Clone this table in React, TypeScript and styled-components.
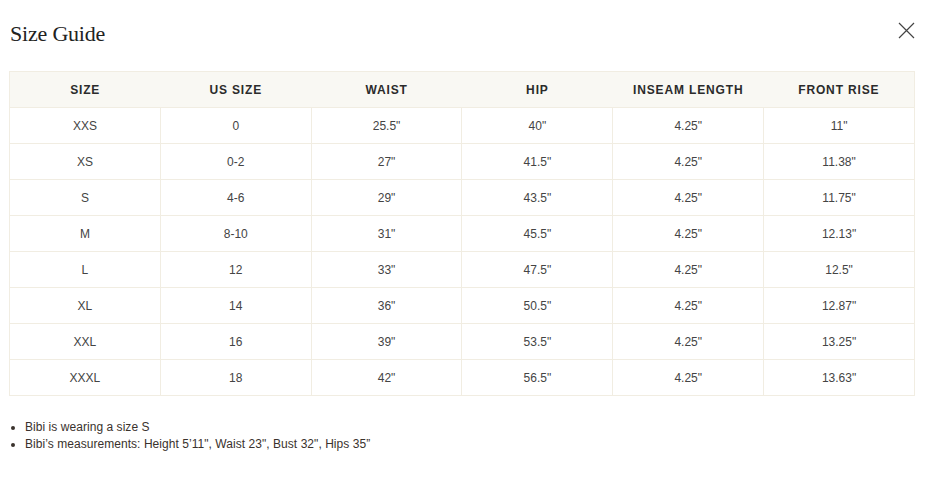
import React from 'react'
import styled, { createGlobalStyle } from 'styled-components'

const GlobalStyle = createGlobalStyle`
  body {
    margin: 0;
    background: #fff;
    font-family: "Liberation Sans", Arial, sans-serif;
  }
`

const headers = ['SIZE', 'US SIZE', 'WAIST', 'HIP', 'INSEAM LENGTH', 'FRONT RISE']

const rows = [
  ['XXS', '0', '25.5"', '40"', '4.25"', '11"'],
  ['XS', '0-2', '27"', '41.5"', '4.25"', '11.38"'],
  ['S', '4-6', '29"', '43.5"', '4.25"', '11.75"'],
  ['M', '8-10', '31"', '45.5"', '4.25"', '12.13"'],
  ['L', '12', '33"', '47.5"', '4.25"', '12.5"'],
  ['XL', '14', '36"', '50.5"', '4.25"', '12.87"'],
  ['XXL', '16', '39"', '53.5"', '4.25"', '13.25"'],
  ['XXXL', '18', '42"', '56.5"', '4.25"', '13.63"'],
]

const App: React.FC = () => {
  return (
    <StyledWrapper>
      <GlobalStyle />
      <StyledHead>
        <StyledTitle>Size Guide</StyledTitle>
        <StyledClose aria-label="Close">
          <svg width="17" height="17" viewBox="0 0 17 17">
            <path d="M1 1L16 16M16 1L1 16" stroke="#444" strokeWidth="1.2" fill="none" />
          </svg>
        </StyledClose>
      </StyledHead>

      <StyledTable>
        <thead>
          <tr>
            {headers.map((h) => (
              <StyledTh key={h}>{h}</StyledTh>
            ))}
          </tr>
        </thead>
        <tbody>
          {rows.map((r) => (
            <tr key={r[0]}>
              {r.map((c, i) => (
                <StyledTd key={i}>{c}</StyledTd>
              ))}
            </tr>
          ))}
        </tbody>
      </StyledTable>

      <StyledList>
        <li>Bibi is wearing a size S</li>
        <li>Bibi’s measurements: Height 5’11", Waist 23", Bust 32", Hips 35”</li>
      </StyledList>
    </StyledWrapper>
  )
}

const StyledWrapper = styled.div`
  width: 905px;
  padding: 0 18px 0 9px;
`

const StyledHead = styled.div`
  display: flex;
  justify-content: space-between;
  align-items: flex-start;
  height: 71px;
`

const StyledTitle = styled.h1`
  margin: 20px 0 0 1px;
  font-family: "Liberation Serif", "Times New Roman", serif;
  font-weight: normal;
  font-size: 22px;
  line-height: 28px;
  color: #222;
  letter-spacing: -0.2px;
`

const StyledClose = styled.button`
  margin: 22px -1px 0 0;
  padding: 0;
  border: 0;
  background: none;
  width: 17px;
  height: 17px;
  display: flex;
`

const StyledTable = styled.table`
  width: 906px;
  border-collapse: collapse;
  table-layout: fixed;
  border: 1px solid #f1ede2;
`

const StyledTh = styled.th`
  height: 35px;
  padding: 0;
  background: #f9f8f3;
  font-size: 12px;
  font-weight: bold;
  letter-spacing: 0.85px;
  color: #2b2b2b;
  text-align: center;
`

const StyledTd = styled.td`
  height: 35px;
  padding: 0;
  border: 1px solid #f1ede2;
  font-size: 12px;
  color: #444;
  text-align: center;
`

const StyledList = styled.ul`
  margin: 23px 0 0;
  padding-left: 16px;
  font-size: 12px;
  line-height: 17px;
  color: #3a322d;
  letter-spacing: 0.05px;
`

export default App
